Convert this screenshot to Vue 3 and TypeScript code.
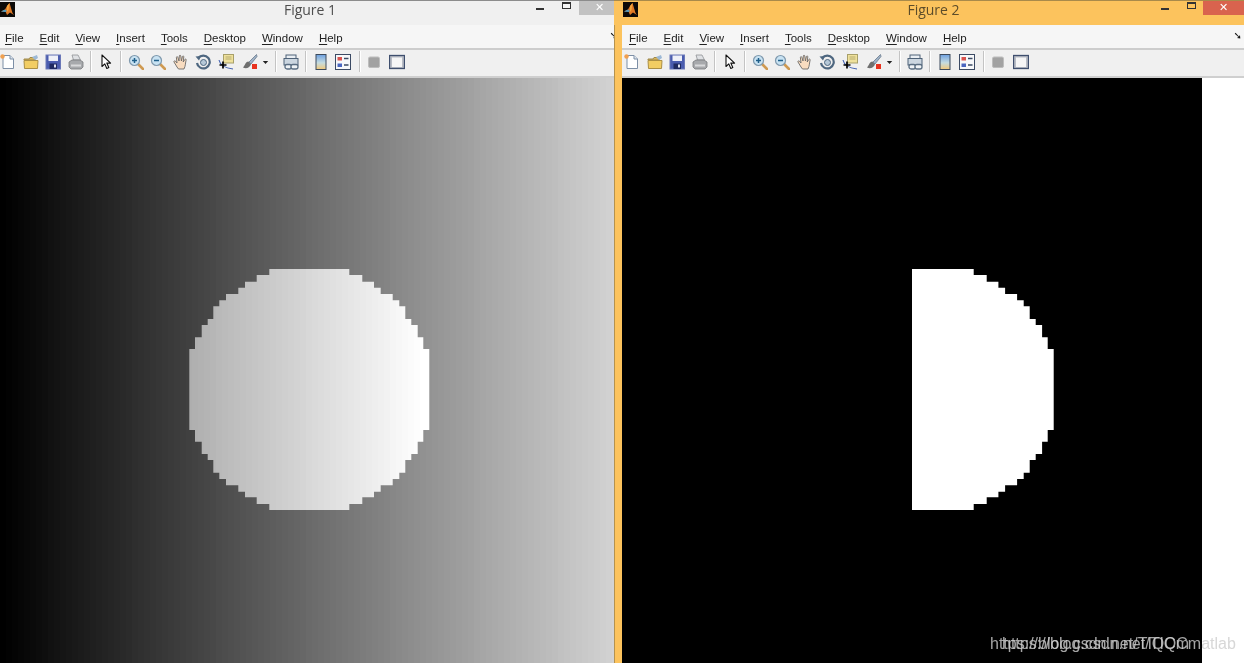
<script setup lang="ts">
interface FigureWindow { title: string; active: boolean }

const windows: FigureWindow[] = [
  { title: 'Figure 1', active: false },
  { title: 'Figure 2', active: true },
]
const menus: string[] = ['File', 'Edit', 'View', 'Insert', 'Tools', 'Desktop', 'Window', 'Help']

// Staircase edge of the pixelated disc, measured from the reference.
const ys: number[] = [269, 275, 281.7, 287.7, 294, 300.3, 306.3, 319, 325, 337.3, 349]
const ysBottom: number[] = [430, 441.7, 454, 460, 472.7, 479, 485.3, 491.7, 497.3, 504, 510]
const leftXs: number[] = [269.3, 256.7, 245, 238.3, 226, 219.3, 213.3, 207.7, 201.7, 195, 189.3]
const rightXs: number[] = [349.3, 362.3, 374, 380.7, 392.7, 399.3, 405.3, 411.3, 417.7, 423.3, 429.3]

function edge(xs: number[]): [number, number][] {
  const pts: [number, number][] = []
  xs.forEach((x, i) => {
    pts.push([x, ys[i]])
    pts.push([x, i < 10 ? ys[i + 1] : ysBottom[0]])
  })
  for (let i = 9; i >= 0; i--) {
    pts.push([xs[i], ysBottom[9 - i]])
    pts.push([xs[i], ysBottom[10 - i]])
  }
  return pts
}
const toStr = (p: [number, number][]) => p.map(([x, y]) => `${x},${y}`).join(' ')

const rightEdge = edge(rightXs)
const discPoints = toStr([...rightEdge, ...edge(leftXs).reverse()])
const halfPoints = toStr([
  [912, 269],
  ...rightEdge.map(([x, y]): [number, number] => [x + 624.4, y]),
  [912, 510],
])

const CELL = 6
const bands = Array.from({ length: 104 }, (_, i) => {
  const x = i * CELL
  const v = Math.min(255, Math.round(x * 0.345))
  const disc = Math.min(255, v + 110)
  return { x, w: CELL, fill: `rgb(${v},${v},${v})`, disc: `rgb(${disc},${disc},${disc})` }
})
</script>

<template>
  <div class="desktop">
    <section v-for="win in windows" :key="win.title" class="window" :class="{ active: win.active }">
      <header class="titlebar">
        <svg class="logo" viewBox="0 0 15 15">
          <rect width="15" height="15" fill="#0c0a08" />
          <path d="M1 9.5 5 7.5 7 4 9.5 1 12.5 11 14 13 10 10.5 7 13 5.5 9.5Z" fill="#e07a26" />
          <path d="M1 9.5 5 7.5 7 9 5.5 10Z" fill="#4f9cc4" />
          <path d="M7 4 9.5 1 8.5 8 7 10Z" fill="#f3a53c" />
        </svg>
        <h1 class="title">{{ win.title }}</h1>
        <div class="controls">
          <span class="min"></span>
          <span class="max"></span>
          <span class="close">✕</span>
        </div>
      </header>

      <div class="body">
        <nav class="menubar">
          <span v-for="m in menus" :key="m" class="menu"><u>{{ m[0] }}</u>{{ m.slice(1) }}</span>
          <span class="dock">➘</span>
        </nav>

        <div class="toolbar">
          <!-- new -->
          <svg class="ic" viewBox="0 0 16 16"><path d="M3 1.5h7l3.5 3.5v9.5H3Z" fill="#fff" stroke="#7d8fa6" /><path d="M10 1.5V5h3.5" fill="#dfe6ee" stroke="#7d8fa6" /><circle cx="2.5" cy="2.5" r="2.2" fill="#f0a050" /></svg>
          <!-- open -->
          <svg class="ic" viewBox="0 0 16 16"><path d="M1 5h5l1-1.5h5V6H1Z" fill="#d9b65c" stroke="#a08a4c" /><path d="M9 3 14 1l1 3-3 2Z" fill="#9db9d6" /><path d="M1 6.5h14l-.5 8H1.5Z" fill="#f2cd63" stroke="#ab8f45" /></svg>
          <!-- save -->
          <svg class="ic" viewBox="0 0 16 16"><rect x="1" y="1" width="14.5" height="14" fill="#4a5cae" stroke="#6b78b8" /><rect x="3.5" y="1.5" width="9.5" height="5.5" fill="#eef0f8" /><rect x="4.5" y="9.5" width="7.5" height="5.5" fill="#1f2a60" /><rect x="9" y="10.5" width="2" height="3" fill="#dfe3f0" /></svg>
          <!-- print -->
          <svg class="ic" viewBox="0 0 16 16"><path d="M4 1h6l2.5 5h-7Z" fill="#dfe1e4" stroke="#8f9296" stroke-width=".8" /><path d="M1 8l3-2h8l3 2v5l-2 2H3l-2-2Z" fill="#a7a9ac" stroke="#77797c" stroke-width=".8" /><path d="M3 10.5h10v2H3Z" fill="#d8d9db" /></svg>
          <i class="sep"></i>
          <!-- pointer -->
          <svg class="ic" viewBox="0 0 16 16"><path d="M4 1v11.5l2.8-2.6 2 4.6 2-1-2-4.4h3.8Z" fill="#fff" stroke="#111" stroke-width="1.1" stroke-linejoin="round" /></svg>
          <i class="sep"></i>
          <!-- zoom in -->
          <svg class="ic" viewBox="0 0 16 16"><path d="M9.5 9.5 15 15" stroke="#cf9a52" stroke-width="2.6" stroke-linecap="round" /><circle cx="6.5" cy="6.5" r="5" fill="#c8e2f2" stroke="#7f99ad" stroke-width="1.2" /><path d="M4 6.5h5M6.5 4v5" stroke="#1f5f8a" stroke-width="1.5" /></svg>
          <!-- zoom out -->
          <svg class="ic" viewBox="0 0 16 16"><path d="M9.5 9.5 15 15" stroke="#cf9a52" stroke-width="2.6" stroke-linecap="round" /><circle cx="6.5" cy="6.5" r="5" fill="#c8e2f2" stroke="#7f99ad" stroke-width="1.2" /><path d="M4 6.5h5" stroke="#1f5f8a" stroke-width="1.5" /></svg>
          <!-- hand -->
          <svg class="ic" viewBox="0 0 16 16"><path d="M4 13 1 8c-.4-1 .8-1.6 1.4-.9L4 9 3.4 3.4c0-1 1.3-1 1.5 0L6 7 6.3 2c0-1 1.4-1 1.5 0L8.4 7l1-4.4c.2-1 1.5-.8 1.4.2L10.2 8l1.7-2.6c.6-.8 1.7 0 1.2.9C12.5 8 12.6 12 11 15H5.5Z" fill="#f8dcc0" stroke="#6c6a68" stroke-width=".9" stroke-linejoin="round" /></svg>
          <!-- rotate -->
          <svg class="ic" viewBox="0 0 16 16"><path d="M3.2 4.2A6.4 6.4 0 1 1 2 9" fill="none" stroke="#4e6780" stroke-width="2.2" /><path d="M.5 2.5 6 2 4 6.5Z" fill="#4e6780" /><circle cx="8.5" cy="8.5" r="3" fill="#b5c8d8" stroke="#4e6780" /></svg>
          <!-- data cursor -->
          <svg class="ic" viewBox="0 0 16 16"><rect x="5.5" y="0.5" width="10" height="8.5" fill="#efe19c" stroke="#a8a06a" /><path d="M7.5 3h6M7.5 5h6" stroke="#b5ab70" /><path d="M1 6c1 5 5 8 14 9" fill="none" stroke="#3f5fb0" stroke-width="1.1" /><path d="M5 7.5v7M1.5 11h7" stroke="#000" stroke-width="1.7" /></svg>
          <!-- brush -->
          <svg class="ic brush" viewBox="0 0 16 16"><path d="M14.5 .5 7 8l2 2 6-7.5Z" fill="#9fb2c6" stroke="#5d6f82" stroke-width=".7" /><path d="M6.5 7.5C3 8 3.5 11 1 13.5c3 1.5 6.5.5 8-3Z" fill="#6f6f6f" /><rect x="10" y="10" width="5" height="5" fill="#e8321f" /></svg>
          <svg class="drop" viewBox="0 0 7 16"><path d="M.8 7h5.4L3.5 10Z" fill="#222" /></svg>
          <i class="sep"></i>
          <!-- link -->
          <svg class="ic" viewBox="0 0 16 16"><rect x="3" y="1" width="10" height="5" fill="#e9eef3" stroke="#4e6278" /><rect x="1" y="4.5" width="14" height="6.5" fill="#cbd6e0" stroke="#4e6278" /><rect x="2" y="10.5" width="6.5" height="4.5" rx="2" fill="#eef2f5" stroke="#5a6e82" stroke-width="1.3" /><rect x="8" y="10.5" width="7" height="4.5" rx="2" fill="#eef2f5" stroke="#5a6e82" stroke-width="1.3" /></svg>
          <i class="sep"></i>
          <!-- colorbar -->
          <svg class="ic" viewBox="0 0 16 16"><defs><linearGradient id="cb" x1="0" y1="0" x2="0" y2="1"><stop offset="0" stop-color="#6d9fe0" /><stop offset=".55" stop-color="#c5dce0" /><stop offset="1" stop-color="#f2c878" /></linearGradient></defs><rect x="3" y=".5" width="10" height="15" fill="url(#cb)" stroke="#3c4a5c" /></svg>
          <!-- legend -->
          <svg class="ic" viewBox="0 0 16 16"><rect x=".5" y=".5" width="15" height="15" fill="#f7f8fa" stroke="#3b4a64" /><rect x="2.5" y="3" width="4.5" height="3.5" fill="#d9534f" /><rect x="2.5" y="9.5" width="4.5" height="3.5" fill="#4a66c0" /><path d="M9 4.5h4.5M9 11h4.5" stroke="#3b4a64" stroke-width="1.3" /></svg>
          <i class="sep wide"></i>
          <!-- hide plot tools -->
          <svg class="ic" viewBox="0 0 16 16"><rect x="2.5" y="3" width="11" height="10.5" rx="1.5" fill="#a2a2a2" stroke="#bdbdbd" /></svg>
          <!-- show plot tools -->
          <svg class="ic" viewBox="0 0 16 16"><rect x=".5" y="1.5" width="15" height="13" fill="#b9bdc6" stroke="#3f4f6e" stroke-width="1.3" /><rect x="3" y="3.5" width="10" height="9.5" fill="#f6f6f6" /></svg>
        </div>

        <div class="canvas">
          <svg v-if="!win.active" class="plot" viewBox="0 78 620 585" preserveAspectRatio="none" shape-rendering="crispEdges">
            <defs><clipPath id="disc"><polygon :points="discPoints" /></clipPath></defs>
            <rect v-for="b in bands" :key="b.x" :x="b.x" y="78" :width="b.w" height="585" :fill="b.fill" />
            <g clip-path="url(#disc)">
              <rect v-for="b in bands" :key="b.x" :x="b.x" y="260" :width="b.w" height="260" :fill="b.disc" />
            </g>
          </svg>
          <template v-else>
            <svg class="plot black" viewBox="622 78 580 585" preserveAspectRatio="none">
              <rect x="622" y="78" width="580" height="585" fill="#000" />
              <polygon :points="halfPoints" fill="#fff" />
            </svg>
            <div class="margin"></div>
            <span class="mark first">https://blog.csdn.net/TIQCm</span>
            <span class="mark second">https://blog.csdn.net/TIQCmatlab</span>
          </template>
        </div>
      </div>
    </section>
  </div>
</template>

<style>
html, body { margin: 0; background: #000; overflow: hidden; }
</style>

<style scoped>
.desktop {
  width: 1244px;
  height: 663px;
  display: flex;
  overflow: hidden;
  filter: blur(0.4px);
}
.window {
  width: 620px;
  margin-right: -6px;
  flex: none;
  display: flex;
  flex-direction: column;
  background: #f0f0f0;
  position: relative;
}
.window.active {
  width: 630px;
  margin-right: 0;
  z-index: 1;
}
.titlebar {
  height: 25px;
  flex: none;
  box-sizing: border-box;
  border-top: 1px solid #8c8c8c;
  background: #f0f0f0;
  display: grid;
  grid-template-columns: 1fr auto 1fr;
  align-items: start;
}
.active .titlebar {
  background: #fcc35d;
  border-top-color: #a98a4a;
  padding-left: 9px;
}
.logo { width: 15px; height: 15px; margin-top: 1px; display: block; }
.title {
  margin: 0;
  font: 400 14px/18px "Open Sans", "Noto Sans", sans-serif;
  color: #4e4e4e;
}
.active .title { color: #5c4c2a; }
.controls {
  justify-self: end;
  display: flex;
  align-items: flex-start;
}
.min {
  width: 8px;
  height: 2px;
  margin-top: 7px;
  background: #333;
}
.max {
  width: 9px;
  height: 7px;
  margin: 1px 8px 0 18px;
  border: 1px solid #333;
  border-top-width: 2px;
  box-sizing: border-box;
  background: #f6f6f6;
}
.active .max { background: #fcc35d; margin-right: 7px; }
.close {
  width: 41px;
  height: 14px;
  background: #c2c2c2;
  color: #fff;
  font: 700 11px/13px "DejaVu Sans", sans-serif;
  text-align: center;
}
.active .close { background: #d9634e; }

.body {
  flex: 1;
  min-height: 0;
  display: flex;
  flex-direction: column;
}
.active .body {
  padding-left: 8px;
  background: linear-gradient(90deg, #b5924e 1px, #fcc35d 1px);
}
.menubar {
  height: 25px;
  flex: none;
  box-sizing: border-box;
  padding: 5px 0 0 5px;
  background: #f6f6f6;
  border-bottom: 2px solid #cdcdcd;
  display: flex;
  gap: 16px;
  position: relative;
  font: 11.5px/16px "Liberation Sans", Arial, sans-serif;
  color: #222;
}
.active .menubar { padding-left: 7px; }
.menu u { text-underline-offset: 2px; }
.dock {
  position: absolute;
  right: 2px;
  top: 4px;
  font: 700 10px/14px "DejaVu Sans", sans-serif;
  color: #111;
}
.toolbar {
  height: 28px;
  flex: none;
  box-sizing: border-box;
  padding-bottom: 3px;
  background: #f0f0f0;
  border-bottom: 2px solid #cfcfcf;
  display: flex;
  align-items: center;
  gap: 6.5px;
}
.active .toolbar { padding-left: 2px; }
.ic { width: 16px; height: 16px; flex: none; display: block; }
.brush { margin-left: 2px; }
.drop { width: 7px; height: 16px; flex: none; margin-left: -3px; }
.sep {
  width: 1px;
  height: 21px;
  flex: none;
  background: #c4c4c4;
  box-shadow: 1px 0 0 #fff;
}
.sep.wide { margin-left: 1px; }

.canvas {
  flex: 1;
  min-height: 0;
  display: flex;
  position: relative;
}
.plot { width: 100%; height: 100%; display: block; }
.plot.black { width: 580px; flex: none; }
.margin { flex: 1; background: #fff; }
.mark {
  position: absolute;
  white-space: nowrap;
  font: 16px/20px "Liberation Sans", Arial, sans-serif;
  color: rgba(205, 205, 205, 0.8);
  top: 556px;
}
.mark.first { left: 368px; }
.mark.second { left: 380px; }
</style>
